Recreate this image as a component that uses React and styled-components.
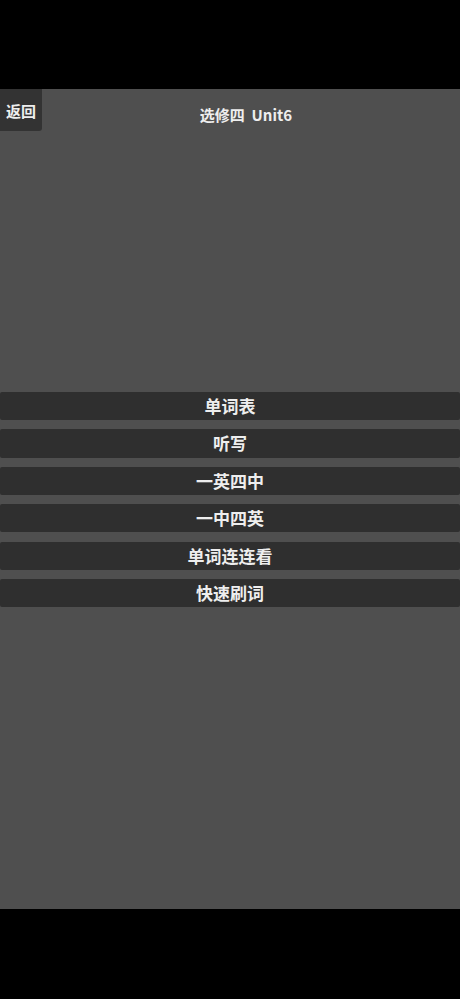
import React from "react";
import styled, { createGlobalStyle } from "styled-components";

const GlobalStyle = createGlobalStyle`
  html, body {
    margin: 0;
    padding: 0;
    background: #000;
  }
  body {
    font-family: "Noto Sans CJK SC", "Noto Sans", sans-serif;
  }
`;

const StyledScreen = styled.div`
  width: 460px;
  height: 999px;
  display: flex;
  flex-direction: column;
  background: #000;
  padding-top: 89px;
  box-sizing: border-box;
`;

const StyledPanel = styled.div`
  height: 820px;
  background: #4f4f4f;
  display: flex;
  flex-direction: column;
`;

const StyledHeader = styled.div`
  display: grid;
  grid-template-columns: 42px 1fr;
  height: 42px;
`;

const StyledBack = styled.button`
  border: 0;
  padding: 2px 0 0;
  margin: 0;
  background: #333;
  color: #eee;
  font-family: inherit;
  font-size: 15px;
  font-weight: 700;
  line-height: 40px;
  border-radius: 0 0 3px 0;
`;

const StyledTitle = styled.h1`
  margin: 0;
  padding: 16px 10px 0 0;
  text-align: center;
  color: #eee;
  font-size: 15px;
  font-weight: 700;
  line-height: 20px;
  white-space: pre;
`;

const StyledMenu = styled.div`
  display: flex;
  flex-direction: column;
  gap: 9.2px;
  margin-top: 261px;
`;

const StyledMenuItem = styled.button`
  height: 28.2px;
  border: 0;
  padding: 0;
  margin: 0;
  background: #2f2f2f;
  color: #eee;
  font-family: inherit;
  font-size: 17px;
  font-weight: 700;
  line-height: 28px;
  border-radius: 2px;
`;

const items = ["单词表", "听写", "一英四中", "一中四英", "单词连连看", "快速刷词"];

const App = () => (
  <>
    <GlobalStyle />
    <StyledScreen>
      <StyledPanel>
        <StyledHeader>
          <StyledBack>返回</StyledBack>
          <StyledTitle>{"选修四  Unit6"}</StyledTitle>
        </StyledHeader>
        <StyledMenu>
          {items.map((item) => (
            <StyledMenuItem key={item}>{item}</StyledMenuItem>
          ))}
        </StyledMenu>
      </StyledPanel>
    </StyledScreen>
  </>
);

export default App;
